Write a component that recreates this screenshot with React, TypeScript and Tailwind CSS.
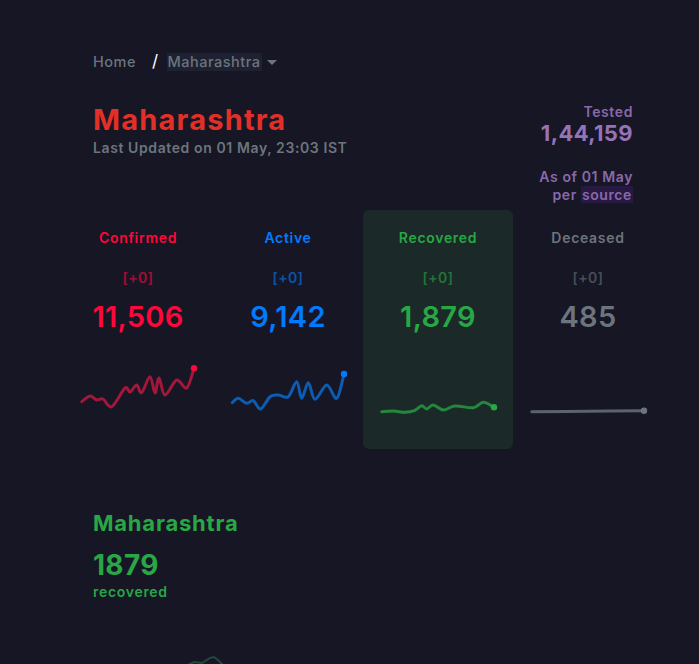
import React from "react";

type P = [number, number];

function smooth(pts: P[]): string {
  if (pts.length < 2) return "";
  let d = `M${pts[0][0]},${pts[0][1]}`;
  for (let i = 0; i < pts.length - 1; i++) {
    const p0 = pts[i - 1] || pts[i];
    const p1 = pts[i];
    const p2 = pts[i + 1];
    const p3 = pts[i + 2] || p2;
    const c1x = p1[0] + (p2[0] - p0[0]) / 6;
    const c1y = p1[1] + (p2[1] - p0[1]) / 6;
    const c2x = p2[0] - (p3[0] - p1[0]) / 6;
    const c2y = p2[1] - (p3[1] - p1[1]) / 6;
    d += ` C${c1x.toFixed(1)},${c1y.toFixed(1)} ${c2x.toFixed(1)},${c2y.toFixed(1)} ${p2[0]},${p2[1]}`;
  }
  return d;
}

const confirmedPts: P[] = [
  [18.7, 46.7], [27, 41], [33.7, 45], [40, 44], [48.7, 51.7], [62, 33], [67, 37], [73.7, 30],
  [78.7, 37.7], [87, 21.7], [92, 38], [96, 23], [102, 40], [113.7, 25], [123.7, 33], [131, 13.3],
];
const activePts: P[] = [
  [19.3, 47.7], [25.3, 43.3], [33.7, 48.3], [40.3, 45.7], [47.7, 54], [57, 41.7], [65.3, 40],
  [75.3, 41.7], [83.7, 26.7], [88.7, 43.3], [95.3, 27.7], [102, 44.3], [113.7, 30], [123.7, 43.3], [131, 19],
];
const recoveredPts: P[] = [
  [18.7, 56.7], [30.3, 56], [42, 57.3], [52, 55.3], [58.7, 50.7], [63.7, 54], [70.3, 50],
  [80.3, 55], [92, 51], [110.3, 52.7], [120.3, 47.3], [131, 52.3],
];
const deceasedPts: P[] = [
  [18.7, 56.7], [75, 56.2], [131, 55.7],
];

function Spark({ pts, line, dot }: { pts: P[]; line: string; dot: string }) {
  const last = pts[pts.length - 1];
  return (
    <svg width="150" height="70" viewBox="0 0 150 70" className="block">
      <path d={smooth(pts)} fill="none" stroke={line} strokeWidth="3" strokeLinecap="round" strokeLinejoin="round" />
      <circle cx={last[0]} cy={last[1]} r="3.2" fill={dot} />
    </svg>
  );
}

function Card({
  label,
  num,
  labelCls,
  deltaCls,
  numCls,
  bg,
  children,
}: {
  label: string;
  num: string;
  labelCls: string;
  deltaCls: string;
  numCls: string;
  bg?: string;
  children: React.ReactNode;
}) {
  return (
    <div className={`w-[150px] h-[239px] rounded-[6px] flex flex-col items-center pt-[18px] ${bg || ""}`}>
      <div className={`text-[14px] leading-[20px] font-semibold tracking-[0.7px] ${labelCls}`}>{label}</div>
      <div className={`mt-[20px] text-[14px] leading-[20px] font-semibold tracking-[0.5px] ${deltaCls}`}>[+0]</div>
      <div className={`mt-[13px] text-[29px] leading-[32px] font-semibold tracking-[0.3px] ${numCls}`}>{num}</div>
      <div className="mt-[22px]">{children}</div>
    </div>
  );
}

export default function App() {
  return (
    <div
      className="w-[699px] h-[664px] overflow-hidden bg-[#161625] relative"
      style={{ fontFamily: "Inter, 'Noto Sans', sans-serif" }}
    >
      <div className="pl-[93px] pr-[66px] pt-[51px]">
        {/* breadcrumb */}
        <div className="flex items-center h-[22px] text-[14.5px] font-medium tracking-[0.5px] text-[#6c757d]">
          <span>Home</span>
          <span className="ml-[16px] text-white text-[17px] font-normal">/</span>
          <span className="ml-[8px] bg-[#1e2132] px-[1px] leading-[18px] text-[#6c757d]">Maharashtra</span>
          <svg width="10" height="6" viewBox="0 0 10 6" className="ml-[5px] mt-[1px]">
            <path d="M0 0 L10 0 L5 5 Z" fill="#6c757d" />
          </svg>
        </div>

        {/* header */}
        <div className="flex justify-between mt-[29px]">
          <div className="flex flex-col">
            <div className="text-[29px] leading-[36px] font-bold text-[#e23028] tracking-[1.2px]">Maharashtra</div>
            <div className="mt-[1px] text-[14px] leading-[18px] font-semibold tracking-[0.6px] text-[#6c757d]">
              Last Updated on 01 May, 23:03 IST
            </div>
          </div>
          <div className="flex flex-col items-end mt-[1px] text-[#9673b9] font-semibold">
            <div className="text-[14px] leading-[18px] tracking-[0.6px] opacity-90">Tested</div>
            <div className="text-[22px] leading-[24px] font-bold tracking-[0.4px]">1,44,159</div>
            <div className="mt-[23px] text-[14px] leading-[18px] tracking-[0.6px] opacity-90">As of 01 May</div>
            <div className="text-[14px] leading-[18px] tracking-[0.6px] opacity-90">
              per <span className="bg-[#2b1a47] px-[1px]">source</span>
            </div>
          </div>
        </div>

        {/* level row */}
        <div className="flex -ml-[30px] w-[600px] mt-[6px]">
          <Card label="Confirmed" num="11,506" labelCls="text-[#ff073a]" deltaCls="text-[#ff073a]/60" numCls="text-[#ff073a]">
            <Spark pts={confirmedPts} line="#a3173b" dot="#ff073a" />
          </Card>
          <Card label="Active" num="9,142" labelCls="text-[#007bff]" deltaCls="text-[#007bff]/60" numCls="text-[#007bff]">
            <Spark pts={activePts} line="#0c5cb4" dot="#007bff" />
          </Card>
          <Card
            label="Recovered"
            num="1,879"
            labelCls="text-[#28a745]"
            deltaCls="text-[#28a745]/60"
            numCls="text-[#28a745]"
            bg="bg-[#1b2a28]"
          >
            <Spark pts={recoveredPts} line="#23883e" dot="#28a745" />
          </Card>
          <Card label="Deceased" num="485" labelCls="text-[#6c757d]" deltaCls="text-[#6c757d]/60" numCls="text-[#6c757d]">
            <Spark pts={deceasedPts} line="#5c636b" dot="#6c757d" />
          </Card>
        </div>

        {/* map meta */}
        <div className="mt-[60px] flex flex-col text-[#28a745]">
          <div className="text-[22px] leading-[28px] font-bold tracking-[0.8px]">Maharashtra</div>
          <div className="mt-[11px] text-[28px] leading-[34px] font-bold tracking-[0.3px]">1879</div>
          <div className="mt-[1px] text-[14px] leading-[17px] font-semibold tracking-[0.7px]">recovered</div>
        </div>
      </div>

      {/* map peek */}
      <svg width="60" height="14" viewBox="0 0 60 14" className="absolute left-[180px] top-[652px]">
        <path d="M6 14 L14 10 L22 11 L30 6 L34 5 L38 8 L44 14" fill="none" stroke="#1f4a3a" strokeWidth="2" />
      </svg>
    </div>
  );
}
